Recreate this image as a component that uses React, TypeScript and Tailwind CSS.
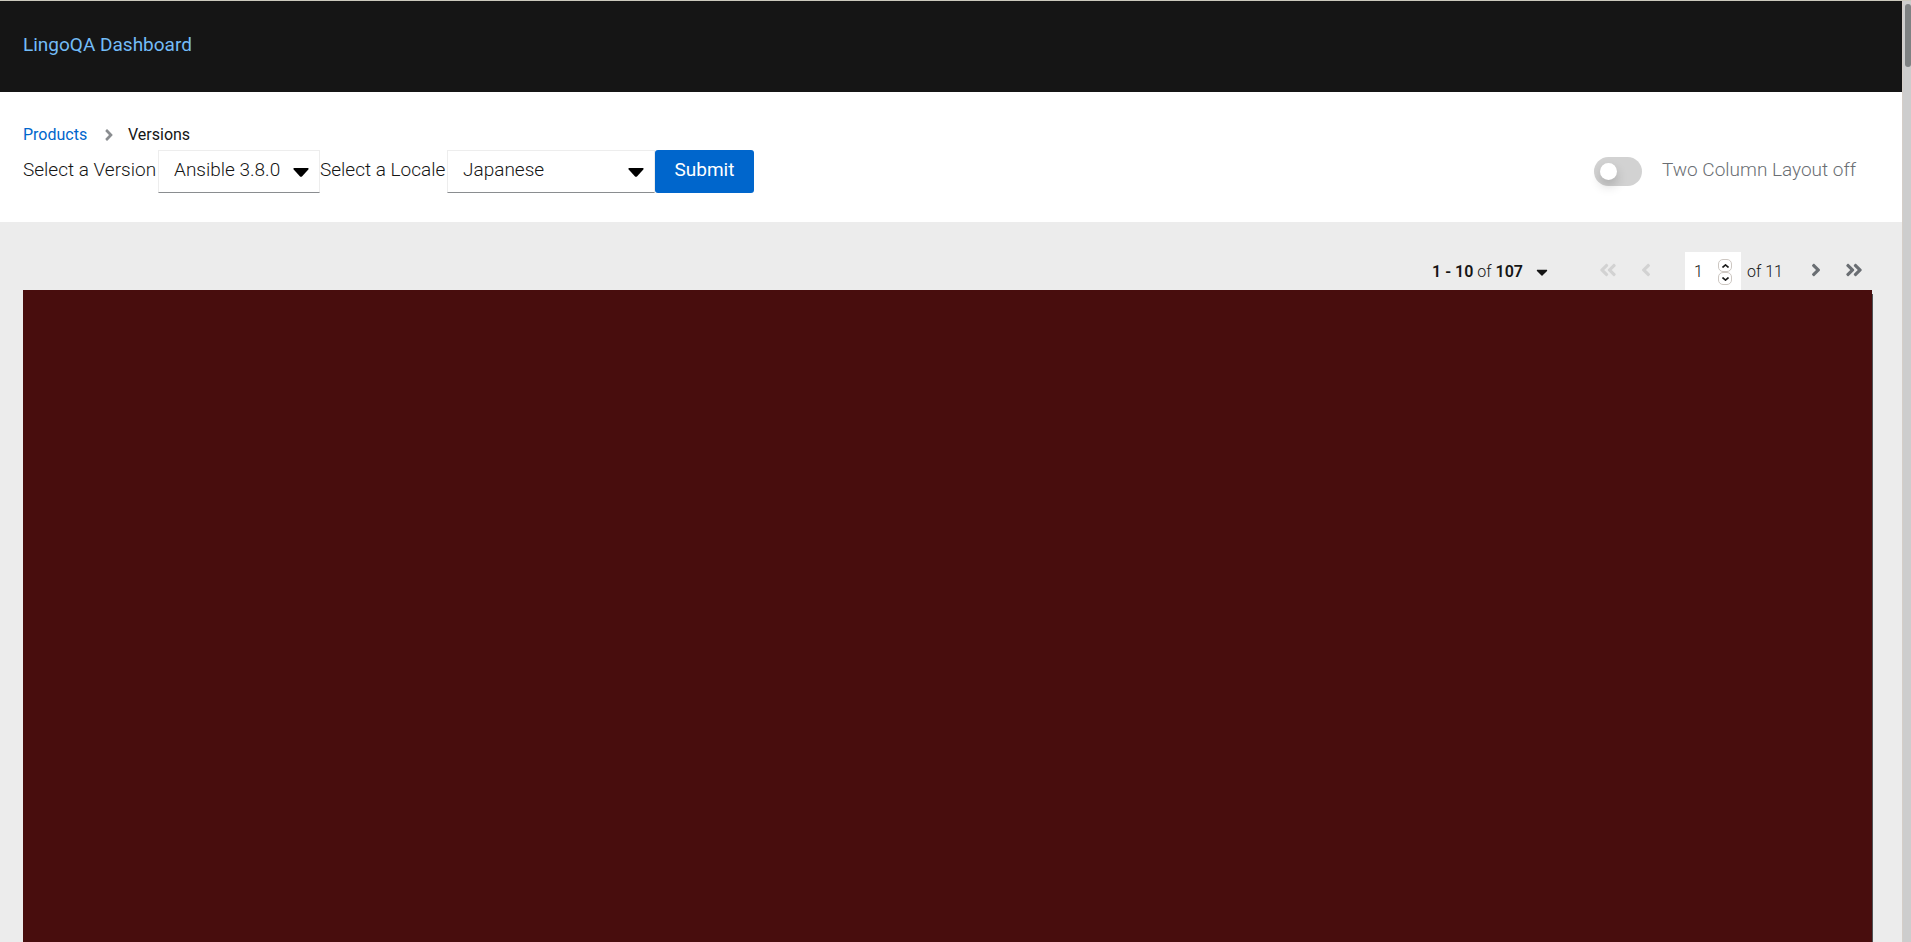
import { useState } from "react";
import type { ReactNode } from "react";
import {
  FaAngleDoubleLeft,
  FaAngleDoubleRight,
  FaAngleLeft,
  FaAngleRight,
  FaCaretDown,
} from "react-icons/fa";

const versions = ["Ansible 3.8.0", "Ansible 3.7.0"];
const locales = ["Japanese", "Korean", "French", "Chinese"];
const lastPage = 11;

function SelectBox({ id, options, className }: { id: string; options: string[]; className: string }) {
  return (
    <div className={`relative h-[43px] ${className}`}>
      <select
        id={id}
        className="h-full w-full appearance-none border border-[#ededed] border-b-[#8a8d90] bg-white pb-[2px] pl-[15px] pr-8 text-[19px] font-light"
      >
        {options.map((option) => (
          <option key={option}>{option}</option>
        ))}
      </select>
      <svg
        className="pointer-events-none absolute right-[11px] top-[18px] h-[9px] w-[16px]"
        viewBox="0 0 16 9"
        aria-hidden="true"
      >
        <path d="M1 0H15Q16 .4 15.3 1.5L9.2 8.2Q8 9.4 6.8 8.2L.7 1.5Q0 .4 1 0Z" fill="#000" />
      </svg>
    </div>
  );
}

function PageButton({
  label,
  disabled,
  onClick,
  children,
}: {
  label: string;
  disabled: boolean;
  onClick: () => void;
  children: ReactNode;
}) {
  return (
    <button
      type="button"
      aria-label={label}
      disabled={disabled}
      onClick={onClick}
      className="flex h-full w-[38px] items-center justify-center pb-[2px] text-xl text-[#6a6e73] disabled:text-[#d2d2d2]"
    >
      {children}
    </button>
  );
}

function StepButton({ label, up, onClick }: { label: string; up?: boolean; onClick: () => void }) {
  return (
    <button
      type="button"
      aria-label={label}
      onClick={onClick}
      className="flex h-[13px] w-[14px] items-center justify-center rounded-[5px] border border-[#cdc7c2] bg-white"
    >
      <svg className="h-1 w-[7px]" viewBox="0 0 7 4" fill="none" stroke="#1a1a1a" strokeWidth="1.6" aria-hidden="true">
        <path d={up ? "M.5 3.5L3.5 .9L6.5 3.5" : "M.5 .5L3.5 3.1L6.5 .5"} />
      </svg>
    </button>
  );
}

export default function App() {
  const [page, setPage] = useState(1);
  const [twoColumns, setTwoColumns] = useState(false);
  const goTo = (next: number) => setPage(Math.min(lastPage, Math.max(1, next)));

  return (
    <div className="flex h-screen overflow-hidden border-t border-[#cbc9bd] bg-[#ececec] font-['Roboto',sans-serif] text-[#151515]">
      <div className="flex min-w-0 flex-1 flex-col">
        <header className="h-[91px] shrink-0 bg-[#151515] px-[23px] pt-[30px]">
          <a href="#" className="text-[19px] leading-7 text-[#73bcf7]">
            LingoQA Dashboard
          </a>
        </header>

        <section className="shrink-0 bg-white pb-[29px] pl-[23px] pr-[46px] pt-[30px]">
          <nav aria-label="Breadcrumb" className="flex h-7 items-center pb-[2px] text-base">
            <a href="#" className="w-[67px] text-[#0066cc]">
              Products
            </a>
            <FaAngleRight className="mx-[10px] text-lg text-[#8a8d90]" aria-hidden="true" />
            <span>Versions</span>
          </nav>
          <form className="flex items-center text-[19px]" onSubmit={(event) => event.preventDefault()}>
            <label htmlFor="version" className="w-[135px] whitespace-nowrap pb-[2px] font-light">
              Select a Version
            </label>
            <SelectBox id="version" options={versions} className="w-[162px]" />
            <label htmlFor="locale" className="w-[127px] whitespace-nowrap pb-[2px] font-light">
              Select a Locale
            </label>
            <SelectBox id="locale" options={locales} className="w-[208px]" />
            <button type="submit" className="h-[43px] w-[99px] rounded-[3px] bg-[#0066cc] pb-[2px] text-white">
              Submit
            </button>
            <label className="ml-auto flex items-center gap-5 font-light text-[#6a6e73]">
              <input
                type="checkbox"
                checked={twoColumns}
                onChange={(event) => setTwoColumns(event.target.checked)}
                className="peer sr-only"
              />
              <span className="flex h-[29px] w-12 items-center rounded-full bg-[#d2d2d2] px-[6px] peer-checked:justify-end peer-checked:bg-[#0066cc]">
                <span className="size-[17px] rounded-full bg-white shadow-[0_6px_12px_rgba(3,3,3,0.2)]" />
              </span>
              <span className="pb-[2px]">Two Column Layout {twoColumns ? "on" : "off"}</span>
            </label>
          </form>
        </section>

        <main className="flex min-h-0 flex-1 flex-col pl-[23px] pr-[29px] pt-[30px]">
          <div className="flex h-[38px] shrink-0 items-center justify-end text-base">
            <button type="button" className="mr-[38px] flex items-center gap-[10px] pt-[2px]">
              <span>
                <b className="font-semibold">1 - 10</b> <span className="font-light">of</span>{" "}
                <b className="font-semibold">107</b>
              </span>
              <FaCaretDown className="text-lg" aria-hidden="true" />
            </button>
            <PageButton label="First page" disabled={page === 1} onClick={() => goTo(1)}>
              <FaAngleDoubleLeft />
            </PageButton>
            <PageButton label="Previous page" disabled={page === 1} onClick={() => goTo(page - 1)}>
              <FaAngleLeft />
            </PageButton>
            <div className="ml-5 flex h-full w-14 items-center bg-white pl-[9px] pr-[9px] pt-[2px]">
              <input
                type="text"
                inputMode="numeric"
                aria-label="Current page"
                value={page}
                onChange={(event) => goTo(Number(event.target.value) || 1)}
                className="w-0 min-w-0 flex-1 font-light"
              />
              <div className="flex flex-col">
                <StepButton label="Increase page" up onClick={() => goTo(page + 1)} />
                <StepButton label="Decrease page" onClick={() => goTo(page - 1)} />
              </div>
            </div>
            <span className="ml-[6px] w-[50px] pt-[2px] font-light">of {lastPage}</span>
            <PageButton label="Next page" disabled={page === lastPage} onClick={() => goTo(page + 1)}>
              <FaAngleRight />
            </PageButton>
            <PageButton label="Last page" disabled={page === lastPage} onClick={() => goTo(lastPage)}>
              <FaAngleDoubleRight />
            </PageButton>
          </div>
          <div className="mr-px flex-1 bg-[#480d0d] shadow-[1px_4px_0_#4f5255]" />
        </main>
      </div>

      <div className="w-[9px] shrink-0 border-l border-[#d5cec8] bg-[#cdcdcd] pl-[2px] pt-[3px]">
        <div className="h-[63px] rounded-full bg-[#7e8182]" />
      </div>
    </div>
  );
}
